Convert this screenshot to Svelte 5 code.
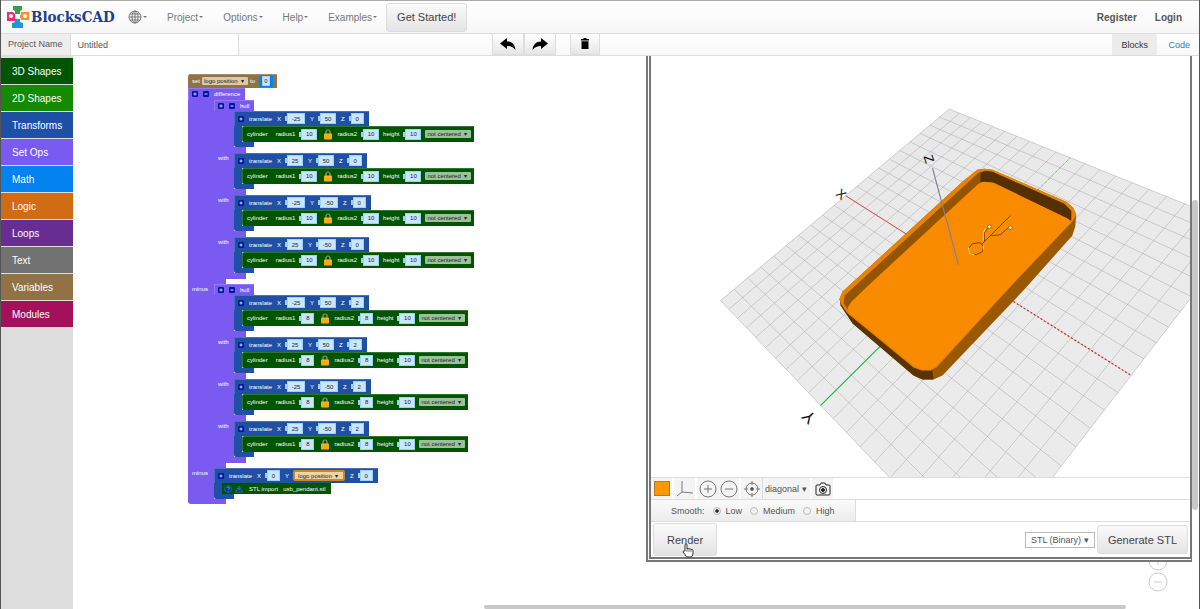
<script lang="ts">
	type Point = [number, number];

	const menus = ['Project', 'Options', 'Help', 'Examples'];

	const categories = [
		{ name: '3D Shapes', tone: 'shapes3d' },
		{ name: '2D Shapes', tone: 'shapes2d' },
		{ name: 'Transforms', tone: 'transforms' },
		{ name: 'Set Ops', tone: 'setops' },
		{ name: 'Math', tone: 'math' },
		{ name: 'Logic', tone: 'logic' },
		{ name: 'Loops', tone: 'loops' },
		{ name: 'Text', tone: 'text' },
		{ name: 'Variables', tone: 'variables' },
		{ name: 'Modules', tone: 'modules' }
	];

	const corners: Point[] = [
		[-25, 50],
		[25, 50],
		[-25, -50],
		[25, -50]
	];

	const hulls = [
		{ label: '', z: 0, radius: 10 },
		{ label: 'minus', z: 2, radius: 8 }
	];

	const fieldWidths: Record<number, number> = { 1: 13, 2: 16, 3: 18 };

	let projectName = $state('Untitled');
	let smooth = $state('Low');

	// Ground plane: u runs along the X axis, v along the Y axis, both from -1 to 1.
	function project(u: number, v: number): Point {
		const w = 1 + 0.2014 * u - 0.1136 * v;
		return [(56 * u - 232.4 * v + 959.2) / w, (-32.4 * u + 92 * v + 267.9) / w];
	}

	function gridPath(divisions: number) {
		let d = '';
		for (let i = 0; i <= divisions; i++) {
			const t = -1 + (2 * i) / divisions;
			d += `M${project(t, -1)}L${project(t, 1)}M${project(-1, t)}L${project(1, t)}`;
		}
		return d;
	}

	const plane = [project(1, 1), project(1, -1), project(-1, -1), project(-1, 1)].join(' ');
	const majorGrid = gridPath(20);
	const minorGrid = gridPath(200);
</script>

<svelte:head>
	<title>BlocksCAD</title>
</svelte:head>

{#snippet mutator(sign: string)}
	<svg class="mutator" viewBox="0 0 6 6" aria-hidden="true">
		<rect width="6" height="6" rx="1.2" fill="#0018a0" />
		<path d={sign === '+' ? 'M1.5 3h3M3 1.5v3' : 'M1.5 3h3'} stroke="#c8d4ff" stroke-width="1" />
	</svg>
{/snippet}

{#snippet field(label: string, value: number)}
	<label class="field">
		<span>{label}</span>
		<span class="plug">
			<input type="text" {value} style="width: {fieldWidths[String(value).length]}px" />
		</span>
	</label>
{/snippet}

{#snippet corner(x: number, y: number, z: number, radius: number)}
	<div class="translate">
		<div class="head transforms">
			{@render mutator('+')}
			<span class="verb">translate</span>
			{@render field('X', x)}
			{@render field('Y', y)}
			{@render field('Z', z)}
		</div>
		<div class="statement">
			<div class="edge transforms"></div>
			<div class="cylinder shapes3d">
				<span class="kind">cylinder</span>
				{@render field('radius1', radius)}
				<svg class="lock" viewBox="0 0 8 11" aria-hidden="true">
					<path d="M2 5V3a2 2 0 0 1 4 0v2" fill="none" stroke="#9a9a80" stroke-width="1.2" />
					<rect y="4.5" width="8" height="6" rx="0.8" fill="#ffb21c" />
					<path d="M0 7h8M0 9h8" stroke="#e08c00" stroke-width="0.5" />
				</svg>
				{@render field('radius2', radius)}
				{@render field('height', 10)}
				<select class="centering" aria-label="centering">
					<option>not centered&nbsp;&nbsp;▾</option>
				</select>
			</div>
		</div>
		<div class="foot transforms"></div>
	</div>
{/snippet}

<div class="app">
	<header class="navbar">
		<a class="brand" href="#home">
			<svg viewBox="0 0 24 24" aria-hidden="true">
				<path d="M7 1h9v4l-2 1v3H9V6L7 5z" fill="#2ea44b" />
				<path d="M1 7h6l2 2v2h2v3H9v2H1z" fill="#ee2a7b" />
				<path d="M15 7h8v8h-8v-2h-2v-3h2z" fill="#f7941d" />
				<path d="M9 14h5v3l3 1v5H6v-5l3-1z" fill="#1c9ad6" />
				<path d="M9 9h5v5H9z" fill="#fff" />
				<circle cx="5" cy="11" r="2" fill="#fff" />
				<circle cx="19" cy="11" r="2" fill="#fff" />
			</svg>
			<span>BlocksCAD</span>
		</a>
		<nav class="menus">
			<button class="menu" aria-label="Language">
				<svg class="globe" viewBox="0 0 14 14" aria-hidden="true">
					<g fill="none" stroke="#777">
						<circle cx="7" cy="7" r="6" />
						<ellipse cx="7" cy="7" rx="3" ry="6" />
						<path d="M7 1v12M1 7h12M2 4h10M2 10h10" />
					</g>
				</svg>
				<i class="caret"></i>
			</button>
			{#each menus as menu (menu)}
				<button class="menu">{menu}<i class="caret"></i></button>
			{/each}
		</nav>
		<button class="btn start">Get Started!</button>
		<div class="account">
			<a href="#register">Register</a>
			<a href="#login">Login</a>
		</div>
	</header>

	<div class="toolbar">
		<label class="project">
			<span>Project Name</span>
			<input type="text" bind:value={projectName} />
		</label>
		<div class="actions">
			<button class="tool" aria-label="Undo">
				<svg viewBox="0 0 16 14" aria-hidden="true">
					<path d="M0 6.500L7 1v3.500c5 0 8 3 8.500 8.500C13 10 11 9 7 9v3z" />
				</svg>
			</button>
			<button class="tool" aria-label="Redo">
				<svg viewBox="0 0 16 14" aria-hidden="true">
					<path d="M16 6.500L9 1v3.500c-5 0-8 3-8.500 8.500C3 10 5 9 9 9v3z" />
				</svg>
			</button>
			<button class="tool trash" aria-label="Delete">
				<svg viewBox="0 0 16 14" aria-hidden="true">
					<path d="M4 2h2.500V1h3v1H12v1.500H4zM4.500 4.200h7V12h-7z" />
				</svg>
			</button>
		</div>
		<nav class="tabs">
			<button class="tab active">Blocks</button>
			<button class="tab">Code</button>
		</nav>
	</div>

	<main>
		<aside class="toolbox">
			{#each categories as category (category.name)}
				<button class="category {category.tone}">{category.name}</button>
			{/each}
		</aside>

		<section class="workspace">
			<div class="blocks">
				<div class="set variables">
					<span>set</span>
					<select aria-label="variable">
						<option>logo position&nbsp;&nbsp;▾</option>
					</select>
					<label class="field">
						<span>to</span>
						<span class="socket math"><input type="text" value="0" /></span>
					</label>
				</div>

				<div class="head difference setops">
					{@render mutator('+')}
					{@render mutator('-')}
					<span>difference</span>
				</div>
				{#each hulls as hull (hull.z)}
					<div class="statement">
						<div class="spine outer setops">{hull.label}</div>
						<div>
							<div class="head hull setops">
								{@render mutator('+')}
								{@render mutator('-')}
								<span>hull</span>
							</div>
							{#each corners as [x, y], i}
								<div class="statement">
									<div class="spine inner setops">{i ? 'with' : ''}</div>
									{@render corner(x, y, hull.z, hull.radius)}
								</div>
								<div class="divider inner setops"></div>
							{/each}
						</div>
					</div>
					<div class="divider outer setops"></div>
				{/each}
				<div class="statement">
					<div class="spine outer setops">minus</div>
					<div class="translate">
						<div class="head transforms">
							{@render mutator('+')}
							<span class="verb">translate</span>
							{@render field('X', 0)}
							<label class="field">
								<span>Y</span>
								<select class="getter">
									<option>logo position&nbsp;&nbsp;▾</option>
								</select>
							</label>
							{@render field('Z', 0)}
						</div>
						<div class="statement">
							<div class="edge transforms"></div>
							<div class="stl shapes3d">
								<svg viewBox="0 0 20 8" aria-hidden="true">
									<circle cx="4" cy="4" r="3.500" fill="#003c8c" stroke="#2d6fc0" stroke-width="0.6" />
									<path d="M3 3a1.200 1.200 0 1 1 1.200 1.400M4.200 6v0.600" fill="none" stroke="#7fb2e8" stroke-width="0.7" />
									<path d="M15 1l3.500 6h-7z" fill="#003c8c" stroke="#2d6fc0" stroke-width="0.8" />
									<path d="M15 3v2" stroke="#7fb2e8" stroke-width="0.7" />
								</svg>
								<span>STL import</span>
								<span>usb_pendant.stl</span>
							</div>
						</div>
						<div class="foot transforms"></div>
					</div>
				</div>
				<div class="divider outer last setops"></div>
			</div>

			<div class="zoom">
				<button aria-label="Zoom in">
					<svg viewBox="0 0 20 20" aria-hidden="true"><circle cx="10" cy="10" r="9" /><path d="M6 10h8M10 6v8" /></svg>
				</button>
				<button aria-label="Zoom out">
					<svg viewBox="0 0 20 20" aria-hidden="true"><circle cx="10" cy="10" r="9" /><path d="M6 10h8" /></svg>
				</button>
			</div>

			<div class="scroll vertical"></div>
			<div class="scroll horizontal"></div>

			<section class="viewer">
				<svg class="scene" viewBox="650 56 540 422" role="img" aria-label="Rendered model">
					<polygon points={plane} fill="#ededed" />
					<path d={minorGrid} stroke="#000" stroke-opacity="0.04" stroke-width="0.5" />
					<path d={majorGrid} stroke="#999" stroke-opacity="0.6" stroke-width="0.7" />
					<path d="M845 196L959 268" stroke="#e04848" />
					<path d="M959 268L1131 376" stroke="#d03030" stroke-width="1.300" stroke-dasharray="2 2" />
					<path d="M820 406L959 268" stroke="#2fb84a" stroke-width="1.300" />
					<path d="M959 268L1070 158" stroke="#7cc58a" stroke-dasharray="3 2" />

					<path
						d="M977 170L984 169L992 170L1066 202L1073 208L1076 215L1075 227L1072 236L1024 290L942 376L933 380L922 380L913 376L852 324L846 315L840 306L839 299L842 292L962 182Z"
						fill="#9a5800"
					/>
					<path d="M839 299L840 306L852 324L913 376L922 380L933 380L932 371L913 368Z" fill="#5a3300" />
					<path
						d="M977 170L984 169L992 170L1066 202L1073 208L1076 215L1073 221L1016 281L936 368L930 371L921 371L913 368L847 314L840 304L839 299L842 292L962 182Z"
						fill="#e88300"
					/>
					<path d="M978 173L985 171L992 172L1064 204L1071 211L1071 219L1060 220L992 183L982 182L847 310L843 304L844 296Z" fill="#945400" />
					<path d="M980 173L986 171L992 172L1064 204L1071 211L1071 221L994 183L980 182Z" fill="#543000" />
					<path
						d="M978 184L984 182L993 183L1068 219L1070 223L1015 281L935 367L930 370L921 370L913 366L849 314L847 308L851 302L873 281Z"
						fill="#f88b00"
					/>

					<g fill="none" stroke="#704000" stroke-width="0.9">
						<path d="M968 249l4-5 8-1 3 4-1 5-6 3-7-1z" />
						<path d="M981 245L1010 216M984 242v-9l4-5M991 236l9-1 8-7" />
					</g>
					<path d="M968 248l1 6M983 246v4M983 241v-8l2-4M969 254l5 1" fill="none" stroke="#ffe07a" />
					<circle cx="989" cy="227" r="1.800" fill="#fff3cc" stroke="#704000" stroke-width="0.6" />
					<circle cx="1010" cy="228" r="1.800" fill="#fff3cc" stroke="#704000" stroke-width="0.6" />

					<path d="M932 168L958 265" stroke="#85809a" stroke-width="1.200" />
					<text transform="translate(841 194) rotate(40)" y="5">X</text>
					<text transform="translate(929 159) rotate(72)" y="5">Z</text>
					<text class="near" transform="translate(808 418) rotate(-135)" y="6">Y</text>
				</svg>

				<div class="row view-tools">
					<button class="icon" aria-label="Colour"><span class="swatch"></span></button>
					<button class="icon" aria-label="Axes">
						<svg viewBox="0 0 20 20" aria-hidden="true"><path d="M7 2v11l11 1M7 13l-5 4" /></svg>
					</button>
					<div class="pair">
						<button class="icon" aria-label="Zoom in view">
							<svg viewBox="0 0 20 20" aria-hidden="true"><circle cx="10" cy="10" r="8" /><path d="M6 10h8M10 6v8" /></svg>
						</button>
						<button class="icon" aria-label="Zoom out view">
							<svg viewBox="0 0 20 20" aria-hidden="true"><circle cx="10" cy="10" r="8" /><path d="M6 10h8" /></svg>
						</button>
					</div>
					<div class="pair">
						<button class="icon" aria-label="Reset view">
							<svg viewBox="0 0 20 20" aria-hidden="true">
								<circle cx="10" cy="10" r="6" />
								<circle cx="10" cy="10" r="1.500" fill="#444" />
								<path d="M10 2v4M10 14v4M2 10h4M14 10h4" />
							</svg>
						</button>
						<select class="angle" aria-label="View angle"><option>diagonal ▾</option></select>
					</div>
					<button class="icon camera" aria-label="Take picture">
						<svg viewBox="0 0 20 20" aria-hidden="true">
							<path d="M4 6h3l1-2h4l1 2h3q1 0 1 1v8q0 1-1 1H4q-1 0-1-1V7q0-1 1-1z" />
							<circle cx="10" cy="11" r="3.500" />
							<circle cx="10" cy="11" r="1.500" fill="#222" />
						</svg>
					</button>
				</div>

				<div class="row">
					<div class="smooth">
						<span>Smooth:</span>
						{#each ['Low', 'Medium', 'High'] as level (level)}
							<label><input type="radio" name="smooth" value={level} bind:group={smooth} />{level}</label>
						{/each}
					</div>
				</div>

				<div class="output">
					<button class="btn render">
						Render
						<svg class="pointer" viewBox="0 0 12 15" aria-hidden="true">
							<path
								d="M3 8V2q0-1 1-1t1 1v4q1-1 2 0 1-1 2 0.500 2-0.500 2 1V10q0 2-1.500 4H4.500Q3 11 1 9q0-1.500 2-1z"
								fill="#fff"
								stroke="#333"
							/>
							<path d="M5 6v3M7 6.500v2.500M9 7v2" stroke="#333" stroke-width="0.7" />
						</svg>
					</button>
					<select class="format" aria-label="File format"><option>STL (Binary)&nbsp;▾</option></select>
					<button class="btn">Generate STL</button>
				</div>
			</section>
		</section>
	</main>
</div>

<style>
	:global(body) {
		background: #fff;
		font-family: 'Liberation Sans', Arial, sans-serif;
	}

	.app,
	.app * {
		box-sizing: border-box;
	}

	.app {
		display: flex;
		flex-direction: column;
		min-height: 100vh;
		border-inline: 1px solid #555;
		overflow: hidden;
		color: #555;
		font-size: 10px;
	}

	button,
	input,
	select {
		margin: 0;
		padding: 0;
		border: 0;
		border-radius: 0;
		background: none;
		color: inherit;
		font: inherit;
	}

	select {
		appearance: none;
	}

	svg {
		display: block;
	}

	.btn {
		border: 1px solid #ddd;
		border-radius: 3px;
		background: linear-gradient(#fafafa, #e4e4e4);
		color: #444;
		font-size: 11px;
	}

	.navbar {
		display: flex;
		align-items: center;
		height: 34px;
		padding: 0 17px 0 5px;
		border-top: 1px solid #aaa;
		border-bottom: 1px solid #ddd;
		background: linear-gradient(#fff, #f7f7f7);
	}

	.brand {
		display: flex;
		align-items: center;
		gap: 1px;
		width: 122px;
		color: #1d3f8f;
		font: bold 15px 'DejaVu Serif Condensed', 'DejaVu Serif', serif;
		text-decoration: none;
	}

	.brand svg {
		flex: none;
		width: 24px;
		height: 24px;
	}

	.menus {
		display: flex;
		gap: 20px;
	}

	.menu {
		display: flex;
		align-items: center;
		gap: 1px;
		color: #777;
	}

	.globe {
		width: 14px;
		height: 14px;
	}

	.caret {
		border: 2px solid transparent;
		border-top-color: #777;
		border-bottom: 0;
	}

	.start {
		height: 29px;
		margin-left: 9px;
		padding: 0 10px;
	}

	.account {
		display: flex;
		gap: 18px;
		margin-left: auto;
	}

	.account a {
		color: #555;
		font-weight: bold;
		text-decoration: none;
	}

	.toolbar {
		display: grid;
		grid-template-columns: 41% 1fr auto;
		height: 22px;
		border-bottom: 1px solid #ddd;
		background: linear-gradient(#fff, #f8f8f8);
		font-size: 9px;
	}

	.project {
		display: flex;
	}

	.project span {
		padding: 5px 7px;
		border-right: 1px solid #ddd;
		background: #eee;
	}

	.project input {
		width: 168px;
		padding: 0 7px;
		border-right: 1px solid #ddd;
		background: #fff;
	}

	.actions {
		display: flex;
	}

	.tool {
		display: grid;
		place-items: center;
		width: 32px;
		border: 1px solid #ddd;
		border-top: 0;
		background: linear-gradient(#fff, #e6e6e6);
	}

	.tool svg {
		width: 16px;
		height: 14px;
	}

	.trash {
		width: 30px;
		margin-left: 14px;
	}

	.tab {
		height: 100%;
		padding: 0 9px;
		color: #337ab7;
	}

	.tab.active {
		background: #ececec;
		color: #333;
	}

	main {
		display: flex;
		flex: 1;
	}

	.toolbox {
		display: flex;
		flex: none;
		flex-direction: column;
		gap: 1px;
		width: 72px;
		padding-top: 2px;
		background: #ddd;
	}

	.category {
		height: 26px;
		padding-left: 11px;
		color: #fff;
		text-align: left;
	}

	.shapes3d {
		background: #005500;
	}

	.shapes2d {
		background: #148a00;
	}

	.transforms {
		background: #1f50a6;
	}

	.setops {
		background: #7a5af0;
	}

	.math {
		background: #0482f0;
	}

	.logic {
		background: #cf6c14;
	}

	.loops {
		background: #672d91;
	}

	.text {
		background: #727272;
	}

	.variables {
		background: #907245;
	}

	.modules {
		background: #a5105a;
	}

	.workspace {
		position: relative;
		flex: 1;
		padding: 18px 0 0 115px;
		overflow: hidden;
	}

	.blocks {
		display: flex;
		flex-direction: column;
		align-items: flex-start;
		color: #fff;
		font-size: 6px;
		line-height: 8px;
	}

	.set {
		display: flex;
		align-items: center;
		gap: 2px;
		height: 14px;
		padding: 0 4px;
		border-radius: 3px 0 0 0;
		box-shadow: inset 0 1px #a88d62;
	}

	.set select,
	.centering {
		width: 46px;
		height: 8px;
		padding: 0 2px;
		border-radius: 1px;
		background: #d8c9ab;
		color: #222;
	}

	.socket {
		padding: 1px 3px;
	}

	.blocks input {
		height: 11px;
		border: 1px solid #9dd0f8;
		background: #c9e6fc;
		color: #222;
		text-align: center;
	}

	.socket input {
		display: block;
		width: 8px;
		height: 10px;
	}

	.head {
		display: flex;
		align-items: center;
		width: max-content;
		height: 15px;
		padding: 0 5px 0 4px;
		box-shadow: inset 1px 1px #ffffff30;
	}

	.head.hull,
	.head.difference {
		gap: 5px;
		height: 11px;
	}

	.head.difference {
		height: 12px;
	}

	.mutator {
		width: 6px;
		height: 6px;
	}

	.verb {
		margin-left: 5px;
	}

	.field {
		display: flex;
		align-items: center;
		gap: 4px;
	}

	.head .field {
		margin-left: 5px;
	}

	.plug {
		display: flex;
		align-items: center;
	}

	.plug::before {
		content: '';
		width: 2px;
		height: 5px;
		background: #9dd0f8;
	}

	.statement {
		display: flex;
	}

	.spine {
		padding: 1px 4px;
	}

	.spine.outer {
		width: 26px;
	}

	.spine.inner {
		width: 20px;
	}

	.divider.inner {
		width: 32px;
		height: 6px;
	}

	.divider.outer {
		width: 38px;
		height: 5px;
	}

	.divider.last {
		border-radius: 0 0 0 3px;
	}

	.edge {
		width: 8px;
	}

	.foot {
		width: 20px;
		height: 5px;
		border-radius: 0 0 0 2px;
	}

	.cylinder {
		display: flex;
		align-items: center;
		gap: 4px;
		height: 16px;
		padding: 0 3px 0 5px;
		border-radius: 2px 0 0 2px;
		box-shadow: inset 1px 1px #ffffff30;
	}

	.kind {
		margin-right: 4px;
	}

	.lock {
		width: 8px;
		height: 11px;
		margin: 0 1px 0 3px;
	}

	.centering {
		width: 46px;
		background: #9cc09a;
	}

	.getter {
		width: 52px;
		height: 11px;
		padding: 0 3px;
		border: 2px solid #c98a20;
		border-radius: 2px;
		background: #ecd3a8;
		color: #222;
	}

	.stl {
		display: flex;
		align-items: center;
		gap: 5px;
		height: 11px;
		padding: 0 5px 0 2px;
	}

	.stl svg {
		width: 20px;
		height: 8px;
	}

	.zoom {
		position: absolute;
		right: 31px;
		bottom: 17px;
		display: grid;
		gap: 1px;
	}

	.zoom svg {
		width: 20px;
		height: 20px;
		fill: none;
		stroke: #ccc;
	}

	.scroll {
		position: absolute;
		border-radius: 3px;
		background: #c8c8c8;
	}

	.vertical {
		top: 144px;
		right: 1px;
		bottom: 99px;
		width: 6px;
	}

	.horizontal {
		right: 73px;
		bottom: 0;
		left: 411px;
		height: 4px;
	}

	.viewer {
		position: absolute;
		top: 0;
		right: 7px;
		width: 546px;
		max-width: 100%;
		border: 5px double #777;
		border-width: 0 2px 5px 5px;
		background: #fff;
		color: #555;
		font-size: 9px;
	}

	.scene {
		width: 100%;
		overflow: hidden;
	}

	.scene text {
		fill: #111;
		font-size: 13px;
		text-anchor: middle;
	}

	.scene .near {
		font-size: 17px;
	}

	.row {
		display: flex;
		gap: 2px;
		height: 22px;
		border-top: 1px solid #ddd;
	}

	.icon {
		display: grid;
		place-items: center;
		width: 21px;
		background: #f4f4f4;
	}

	.icon svg {
		width: 20px;
		height: 20px;
		fill: none;
		stroke: #777;
	}

	.swatch {
		width: 16px;
		height: 15px;
		border: 1px solid #b87820;
		background: #ff9800;
	}

	.pair {
		display: flex;
		background: #f4f4f4;
	}

	.angle {
		width: 48px;
		padding: 0 2px;
		border-left: 1px solid #ddd;
	}

	.camera svg {
		stroke: #222;
	}

	.smooth {
		display: flex;
		align-items: center;
		gap: 8px;
		padding: 0 20px;
		border-right: 1px solid #ddd;
		background: linear-gradient(#fafafa, #ececec);
	}

	.smooth label {
		display: flex;
		align-items: center;
		gap: 5px;
	}

	.smooth input {
		width: 8px;
		height: 8px;
		border: 1px solid #bbb;
		border-radius: 50%;
		appearance: none;
	}

	.smooth input:checked {
		background: radial-gradient(#333 35%, #eee 45%);
	}

	.output {
		display: flex;
		align-items: center;
		gap: 2px;
		height: 36px;
		padding: 0 2px;
		border-top: 1px solid #ddd;
	}

	.output .btn {
		height: 29px;
		padding: 0 10px;
	}

	.output .render {
		position: relative;
		height: 33px;
		margin-right: auto;
		padding: 0 13px;
	}

	.pointer {
		position: absolute;
		top: 19px;
		left: 28px;
		width: 12px;
		height: 15px;
	}

	.output .format {
		width: 70px;
		height: 16px;
		padding: 0 5px;
		border: 1px solid #bbb;
	}
</style>
